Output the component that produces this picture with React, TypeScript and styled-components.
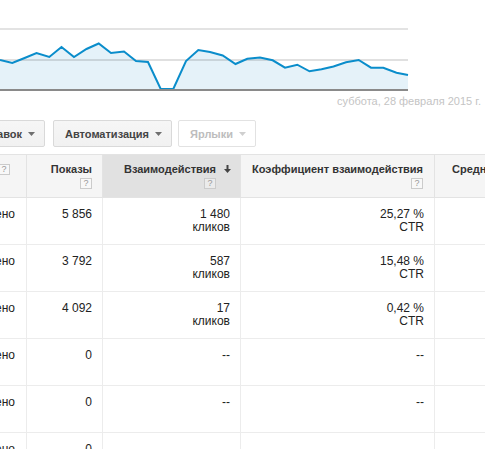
import React from "react";
import styled, { createGlobalStyle } from "styled-components";

const Global = createGlobalStyle`
  *, *::before, *::after { box-sizing: border-box; }
  html, body { margin: 0; padding: 0; background: #fff; }
  body { font-family: "Liberation Sans", Arial, sans-serif; color: #222; }
`;

const Page = styled.div`
  width: 485px;
  height: 449px;
  overflow: hidden;
  background: #fff;
`;

const ChartBlock = styled.div`
  display: flex;
  flex-direction: column;
`;

const ChartSvg = styled.svg`
  display: block;
`;

const Caption = styled.div`
  margin-top: 3px;
  padding-right: 4px;
  text-align: right;
  font-size: 11px;
  line-height: 13px;
  color: #c4c4c4;
  white-space: nowrap;
`;

const Toolbar = styled.div`
  display: flex;
  gap: 6px;
  margin-top: 12px;
  height: 27px;
`;

const ClipStart = styled.div<{ $w: number }>`
  flex: none;
  width: ${(p) => p.$w}px;
  display: flex;
  justify-content: flex-end;
  overflow: hidden;
  margin-right: 2px;
`;

const Button = styled.button<{ $off?: boolean }>`
  flex: none;
  display: inline-flex;
  align-items: center;
  gap: 6px;
  height: 27px;
  padding: 0 9px 0 11px;
  border: 1px solid ${(p) => (p.$off ? "#e2e2e2" : "#d9d9d9")};
  border-radius: 2px;
  background: ${(p) => (p.$off ? "#fff" : "linear-gradient(#f6f6f6, #f1f1f1)")};
  font-family: "Liberation Sans", Arial, sans-serif;
  font-weight: bold;
  font-size: 11px;
  color: ${(p) => (p.$off ? "#bdbdbd" : "#444")};
  white-space: nowrap;
  cursor: default;
`;

const Caret = ({ light }: { light?: boolean }) => (
  <svg width="7" height="4" viewBox="0 0 7 4" style={{ display: "block" }}>
    <polygon points="0,0 7,0 3.5,4" fill={light ? "#cfcfcf" : "#6f6f6f"} />
  </svg>
);

const Grid = styled.table`
  margin-top: 7px;
  border-collapse: separate;
  border-spacing: 0;
  table-layout: fixed;
  width: 585px;
  border-top: 1px solid #e3e3e3;
`;

const Col = styled.col<{ $w: number }>`
  width: ${(p) => p.$w}px;
`;

const HeadRow = styled.tr`
  height: 43px;
`;

const Th = styled.th<{ $sorted?: boolean; $pr?: number; $pl?: number; $left?: boolean }>`
  vertical-align: top;
  padding: 8px ${(p) => p.$pr ?? 10}px 0 ${(p) => p.$pl ?? 10}px;
  background: ${(p) => (p.$sorted ? "#e1e1e1" : "#f5f5f5")};
  border-right: 1px solid #e3e3e3;
  border-bottom: 1px solid #e3e3e3;
  font-size: 11px;
  line-height: 13px;
  font-weight: bold;
  color: #333;
  text-align: ${(p) => (p.$left ? "left" : "right")};
  white-space: nowrap;
  overflow: hidden;
`;

const HeadInner = styled.div`
  display: flex;
  justify-content: flex-end;
  align-items: flex-start;
  gap: 8px;
`;

const HeadInline = styled.div`
  display: flex;
  justify-content: flex-end;
  align-items: center;
  gap: 4px;
  overflow: hidden;
  padding-right: 16px;
`;

const Label = styled.div`
  display: flex;
  flex-direction: column;
  align-items: flex-end;
`;

const Help = styled.span<{ $inline?: boolean }>`
  flex: none;
  display: inline-block;
  width: 12px;
  height: 11px;
  margin-top: ${(p) => (p.$inline ? 0 : 2)}px;
  border: 1px solid #cbcbcb;
  background: rgba(255, 255, 255, 0.35);
  font-size: 9px;
  line-height: 9px;
  font-weight: normal;
  color: #999;
  text-align: center;
`;

const SortArrow = () => (
  <svg width="7" height="8" viewBox="0 0 7 8" style={{ display: "block", marginTop: 2 }}>
    <rect x="2.5" y="0" width="2" height="5" fill="#444" />
    <polygon points="0,4 7,4 3.5,8" fill="#444" />
  </svg>
);

const BodyRow = styled.tr`
  height: 47px;
`;

const Td = styled.td<{ $flush?: boolean }>`
  vertical-align: top;
  padding: ${(p) => (p.$flush ? "10px 0 0" : "10px 10px 0")};
  border-right: 1px solid #ececec;
  border-bottom: 1px solid #ececec;
  font-size: 12px;
  line-height: 13px;
  color: #222;
  text-align: right;
  white-space: nowrap;
  overflow: hidden;
`;

const ClipCell = styled.div`
  display: flex;
  justify-content: flex-end;
  overflow: hidden;
  padding-right: 11px;
`;

const Line = styled.div`
  display: block;
`;

type Row = { imp: string; inter: [string, string] | null; rate: [string, string] | null };

const rows: Row[] = [
  { imp: "5\u00a0856", inter: ["1\u00a0480", "кликов"], rate: ["25,27\u00a0%", "CTR"] },
  { imp: "3\u00a0792", inter: ["587", "кликов"], rate: ["15,48\u00a0%", "CTR"] },
  { imp: "4\u00a0092", inter: ["17", "кликов"], rate: ["0,42\u00a0%", "CTR"] },
  { imp: "0", inter: null, rate: null },
  { imp: "0", inter: null, rate: null },
  { imp: "0", inter: null, rate: null },
];

const values = [
  60, 63, 58, 53, 57, 47, 57, 49, 43.5, 53, 51.5, 61, 62, 89, 89, 61, 50, 52, 55.5, 64,
  58.8, 57.5, 60.3, 67.7, 64.7, 71.3, 69.3, 66.5, 62.3, 60, 67.7, 67.7, 72.7, 75,
];
const xs = [
  0, 12.3, 24.6, 36.5, 49.3, 61.5, 74, 86.5, 98.7, 111, 124, 136, 148, 160.7, 173.3, 186, 198.3,
  210, 222.7, 235.5, 247.3, 260, 272.7, 285, 297.3, 309.5, 321.5, 333.5, 346, 358.7, 371, 383.3,
  396.5, 408,
];

const Chart = () => {
  const pts = values.map((v, i) => `${xs[i]},${v}`).join(" ");
  const area = `0,90 ${pts} 408,90`;
  return (
    <ChartSvg width="485" height="92" viewBox="0 0 485 92">
      <polygon points={area} fill="#e5f2f9" />
      <line x1="0" y1="29" x2="408" y2="29" stroke="#000" strokeOpacity="0.11" strokeWidth="2" />
      <line x1="0" y1="60" x2="408" y2="60" stroke="#000" strokeOpacity="0.12" strokeWidth="2" />
      <polyline points={pts} fill="none" stroke="#0a8dcb" strokeWidth="2" strokeLinejoin="miter" />
      <line x1="0" y1="90" x2="408" y2="90" stroke="#8a8a8a" strokeWidth="2" />
    </ChartSvg>
  );
};

export default function App() {
  return (
    <Page>
      <Global />
      <ChartBlock>
        <Chart />
        <Caption>суббота, 28 февраля 2015 г.</Caption>
      </ChartBlock>
      <Toolbar>
        <ClipStart $w={45}>
          <Button>
            Стратегия назначения ставок <Caret />
          </Button>
        </ClipStart>
        <Button>
          Автоматизация <Caret />
        </Button>
        <Button $off>
          Ярлыки <Caret light />
        </Button>
      </Toolbar>
      <Grid>
        <colgroup>
          <Col $w={27} />
          <Col $w={76} />
          <Col $w={138} />
          <Col $w={194} />
          <Col $w={150} />
        </colgroup>
        <thead>
          <HeadRow>
            <Th $pr={0} $pl={0}>
              <HeadInline>
                Статус <Help $inline>?</Help>
              </HeadInline>
            </Th>
            <Th>
              <Label>
                Показы
                <Help>?</Help>
              </Label>
            </Th>
            <Th $sorted $pr={9}>
              <HeadInner>
                <Label>
                  Взаимодействия
                  <Help>?</Help>
                </Label>
                <SortArrow />
              </HeadInner>
            </Th>
            <Th $pr={11}>
              <Label>
                Коэффициент взаимодействия
                <Help>?</Help>
              </Label>
            </Th>
            <Th $left $pl={17}>
              Средняя цена за клик
            </Th>
          </HeadRow>
        </thead>
        <tbody>
          {rows.map((r, i) => (
            <BodyRow key={i}>
              <Td $flush>
                <ClipCell>Включено</ClipCell>
              </Td>
              <Td>{r.imp}</Td>
              <Td>
                {r.inter ? (
                  <>
                    <Line>{r.inter[0]}</Line>
                    <Line>{r.inter[1]}</Line>
                  </>
                ) : (
                  "--"
                )}
              </Td>
              <Td>
                {r.rate ? (
                  <>
                    <Line>{r.rate[0]}</Line>
                    <Line>{r.rate[1]}</Line>
                  </>
                ) : (
                  "--"
                )}
              </Td>
              <Td />
            </BodyRow>
          ))}
        </tbody>
      </Grid>
    </Page>
  );
}
